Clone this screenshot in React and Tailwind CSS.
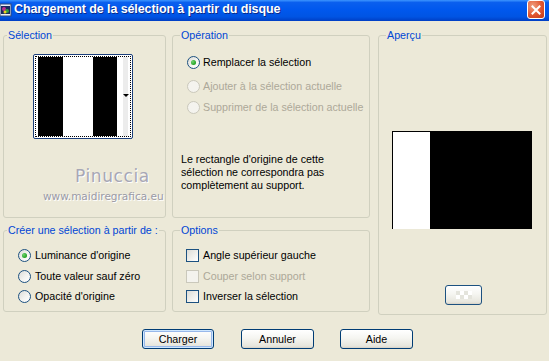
import React from 'react'

function Radio({ checked, disabled }) {
  return (
    <span
      className={`relative inline-flex h-[13px] w-[13px] shrink-0 items-center justify-center rounded-full border ${
        disabled
          ? 'border-[#cac8bb] bg-[#f4f3ee]'
          : 'border-[#1c5180] bg-[linear-gradient(135deg,#dcdcd7_0%,#f4f4f1_55%,#ffffff_100%)]'
      }`}
    >
      {checked && (
        <span className="h-[5px] w-[5px] rounded-full bg-[radial-gradient(circle_at_35%_35%,#6fd36f,#21a121_70%)]" />
      )}
    </span>
  )
}

function Check({ disabled }) {
  return (
    <span
      className={`inline-block h-[13px] w-[13px] shrink-0 border ${
        disabled
          ? 'border-[#cac8bb] bg-[#f4f3ee]'
          : 'border-[#1c5180] bg-[linear-gradient(135deg,#dcdcd7_0%,#f0f0ec_55%,#ffffff_100%)]'
      }`}
    />
  )
}

function Group({ label, legendClass = 'ml-[4px]', className = '', children }) {
  return (
    <fieldset className={`flex flex-col rounded-[3px] border border-[#d0d0bf] ${className}`}>
      <legend className={`${legendClass} px-[1px] leading-[13px] text-[#0046d5]`}>{label}</legend>
      {children}
    </fieldset>
  )
}

function XpButton({ children, primary, className = '' }) {
  return (
    <button
      className={`flex h-[20px] items-center justify-center rounded-[3px] border border-[#003c74] bg-[linear-gradient(180deg,#ffffff_0%,#f5f5f1_45%,#e6e5dc_90%,#d6d0c5_100%)] text-[10.7px] text-black ${
        primary ? 'shadow-[inset_0_0_0_1px_#cee7ff,inset_0_0_0_2px_#98b8ea]' : ''
      } ${className}`}
    >
      {children}
    </button>
  )
}

export default function App() {
  return (
    <div className="flex h-[361px] w-[549px] flex-col overflow-hidden bg-[#ece9d8] font-['Liberation_Sans',Arial,sans-serif] text-[10.7px] leading-[13px] text-black">
      {/* title bar */}
      <div className="flex h-[21px] shrink-0 items-center bg-[linear-gradient(180deg,#3d95ff_0%,#0a5fee_12%,#0058ee_45%,#0054e3_80%,#003ec4_100%)] pr-[4px]">
        <svg width="12" height="14" viewBox="0 0 12 14" className="mb-[2px] shrink-0">
          <rect x="0" y="1" width="11" height="12" fill="#e8eef8" stroke="#304878" strokeWidth="1" />
          <rect x="1" y="3" width="9" height="8" fill="#1a2a60" />
          <circle cx="4" cy="6" r="2" fill="#c03090" />
          <circle cx="7" cy="8" r="2" fill="#30a040" />
          <circle cx="5" cy="9" r="1.5" fill="#f0d020" />
        </svg>
        <span className="ml-[2px] pb-[3px] text-[12.5px] font-bold tracking-[-0.1px] text-white [text-shadow:1px_1px_0_#0a2a8a]">
          Chargement de la sélection à partir du disque
        </span>
        <div className="ml-auto mb-[2px] flex h-[19px] w-[18px] items-center justify-center rounded-[3px] border border-white bg-[radial-gradient(circle_at_30%_30%,#f0a080,#e05530_55%,#c03a18_100%)]">
          <svg width="10" height="10" viewBox="0 0 10 10">
            <path d="M1.5 1.5 L8.5 8.5 M8.5 1.5 L1.5 8.5" stroke="white" strokeWidth="2" strokeLinecap="square" />
          </svg>
        </div>
      </div>

      {/* body */}
      <div className="flex flex-1 flex-col pl-[3px] pt-[8px]">
        <div className="flex">
          {/* left column */}
          <div className="flex w-[163px] flex-col gap-[6px]">
            <Group label="Sélection" legendClass="ml-[3px]" className="h-[189px]">
              <div className="ml-[29px] mt-[12px] h-[85px] w-[100px] rounded-[2px] border border-[#1c3f7a] bg-white p-px">
                <div className="flex h-full w-full border border-dotted border-black">
                  <div className="w-[2px] bg-white" />
                  <div className="w-[25px] bg-black" />
                  <div className="w-[30px] bg-white" />
                  <div className="w-[24px] bg-black" />
                  <div className="w-[6px] bg-white" />
                  <div className="relative w-[5px] bg-[#ececec]">
                    <svg width="6" height="4" viewBox="0 0 6 4" className="absolute left-0 top-[37px]">
                      <path d="M0 0 H6 L3 3 Z" fill="black" />
                    </svg>
                  </div>
                </div>
              </div>
              <div className="ml-[71px] mt-[27px] font-['DejaVu_Sans',sans-serif] text-[17px] leading-[20px] tracking-[0.6px] text-[#a7a7b5] [text-shadow:1px_1px_0_#ffffff]">
                Pinuccia
              </div>
              <div className="ml-[39px] mt-[4px] whitespace-nowrap font-['DejaVu_Sans',sans-serif] text-[10.5px] leading-[12px] text-[#9a9aa6] [text-shadow:1px_1px_0_#ffffff]">
                www.maidiregrafica.eu
              </div>
            </Group>

            <Group label="Créer une sélection à partir de :" legendClass="ml-[3px]" className="h-[88px]">
              <div className="ml-[14px] mt-[12px] flex h-[13px] items-center gap-[4px]">
                <Radio checked />
                <span>Luminance d'origine</span>
              </div>
              <div className="ml-[14px] mt-[8px] flex h-[13px] items-center gap-[4px]">
                <Radio />
                <span>Toute valeur sauf zéro</span>
              </div>
              <div className="ml-[14px] mt-[7px] flex h-[13px] items-center gap-[4px]">
                <Radio />
                <span>Opacité d'origine</span>
              </div>
            </Group>
          </div>

          {/* middle column */}
          <div className="ml-[6px] flex w-[198px] flex-col gap-[6px]">
            <Group label="Opération" legendClass="ml-[7px]" className="h-[189px]">
              <div className="ml-[14px] mt-[14px] flex h-[13px] items-center gap-[3px]">
                <Radio checked />
                <span>Remplacer la sélection</span>
              </div>
              <div className="ml-[14px] mt-[11px] flex h-[13px] items-center gap-[3px] text-[#aca899]">
                <Radio disabled />
                <span>Ajouter à la sélection actuelle</span>
              </div>
              <div className="ml-[14px] mt-[8px] flex h-[13px] items-center gap-[3px] text-[#aca899]">
                <Radio disabled />
                <span>Supprimer de la sélection actuelle</span>
              </div>
              <p className="ml-[8px] mt-[39px] w-[170px]">
                Le rectangle d'origine de cette
                <br />
                sélection ne correspondra pas
                <br />
                complètement au support.
              </p>
            </Group>

            <Group label="Options" legendClass="ml-[7px]" className="h-[88px]">
              <div className="ml-[13px] mt-[12px] flex h-[13px] items-center gap-[4px]">
                <Check />
                <span>Angle supérieur gauche</span>
              </div>
              <div className="ml-[13px] mt-[8px] flex h-[13px] items-center gap-[4px] text-[#aca899]">
                <Check disabled />
                <span>Couper selon support</span>
              </div>
              <div className="ml-[13px] mt-[7px] flex h-[13px] items-center gap-[4px]">
                <Check />
                <span>Inverser la sélection</span>
              </div>
            </Group>
          </div>

          {/* right column */}
          <div className="ml-[8px] flex w-[169px] flex-col">
            <Group label="Aperçu" legendClass="ml-[7px]" className="h-[286px]">
              <div className="ml-[13px] mt-[89px] flex h-[98px] w-[140px] border-l border-t border-black">
                <div className="w-[37px] bg-white" />
                <div className="flex-1 bg-black" />
              </div>
              <XpButton className="ml-[66px] mt-[56px] h-[18px] w-[37px] !border-[#1c5180]">
                <span className="h-[8px] w-[16px] bg-[repeating-conic-gradient(#ffffff_0%_25%,#e4e4dc_0%_50%)] bg-[length:8px_8px]" />
              </XpButton>
            </Group>
          </div>
        </div>

        {/* buttons */}
        <div className="mt-[14px] flex">
          <XpButton primary className="ml-[139px] w-[72px]">Charger</XpButton>
          <XpButton className="ml-[27px] w-[73px]">Annuler</XpButton>
          <XpButton className="ml-[26px] w-[73px]">Aide</XpButton>
        </div>
      </div>
    </div>
  )
}
